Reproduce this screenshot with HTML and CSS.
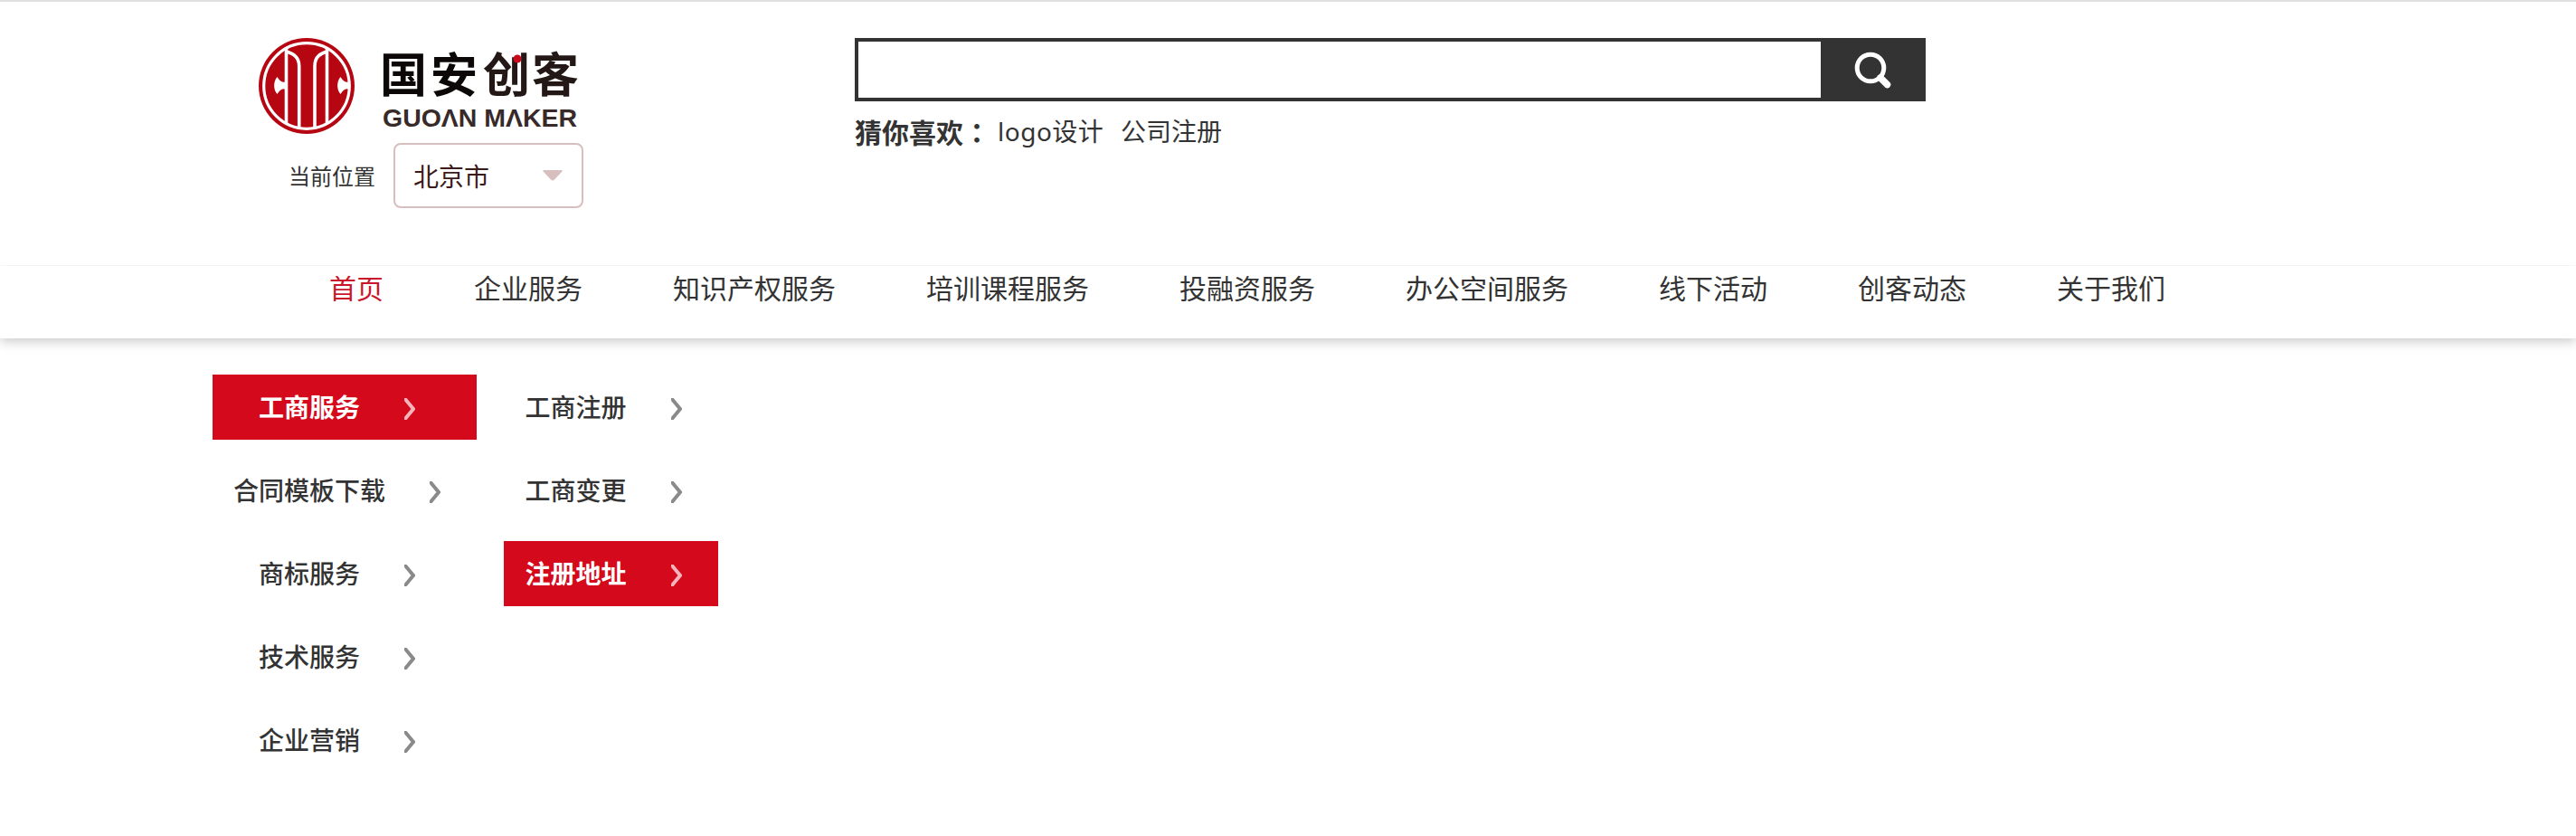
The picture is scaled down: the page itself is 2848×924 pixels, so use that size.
FILE: index.html
```html
<!DOCTYPE html>
<html lang="zh-CN">
<head>
<meta charset="utf-8">
<title>国安创客</title>
<link rel="stylesheet" href="styles.css">
</head>
<body>
<header class="header">
  <div class="brand">
    <svg class="logo" viewBox="0 0 354 106" width="354" height="106">
      <clipPath id="disc"><circle cx="53" cy="53" r="47"/></clipPath>
      <circle cx="53" cy="53" r="53" fill="#b50612"/>
      <g clip-path="url(#disc)">
        <g fill="none" stroke="#fff" stroke-width="3.6">
          <path d="M30.500 0V106M75.500 0V106"/>
          <path d="M30.500 15C37 17 44.700 20 44.700 31V106M75.500 15C69 17 62 20 62 31V106"/>
        </g>
        <path d="M30 48C26 50.500 23 47 20.500 43C16 48 16 57 20.500 62C23 58 26 55 30 57Z" fill="#fff"/>
        <path d="M100 48C96 50.500 93 47 90.500 43C86 48 86 57 90.500 62C93 58 96 55 100 57Z" fill="#fff"/>
      </g>
      <circle cx="53" cy="53" r="47.300" fill="none" stroke="#fff" stroke-width="3.200"/>
      <g class="logo-cn">
        <text x="134" y="60">国</text><text x="190" y="60">安</text>
        <text x="248" y="60" class="logo-cn-brown">创</text><text x="302" y="60" class="logo-cn-brown">客</text>
      </g>
      <circle cx="286" cy="23" r="4.500" fill="#c80a1b"/>
      <text class="logo-en" x="137" y="98" textLength="215" lengthAdjust="spacingAndGlyphs">GUOΛN MΛKER</text>
    </svg>
    <div class="location">
      <span class="location-label">当前位置</span>
      <div class="select">
        <span>北京市</span>
        <svg width="22" height="12" viewBox="0 0 22 12"><path d="M1.500 0H20.500Q23 0 21 2L13 10.500Q11 12.700 9 10.500L1 2Q-1 0 1.500 0Z" fill="#d8bfbf"/></svg>
      </div>
    </div>
  </div>
  <div class="search">
    <div class="search-bar">
      <input class="search-input" type="text">
      <button class="search-button">
        <svg width="44" height="44" viewBox="0 0 44 44" fill="none" stroke="#fff"><circle cx="19" cy="20" r="14.800" stroke-width="5"/><path d="M30 31L37.500 38.500" stroke-width="7.500" stroke-linecap="round"/></svg>
      </button>
    </div>
    <div class="guess"><b class="guess-title">猜你喜欢<span class="colon" lang="zh-TW">：</span></b><a class="guess-link">logo设计</a><a>公司注册</a></div>
  </div>
</header>
<nav class="nav">
  <a class="nav-active">首页</a><a>企业服务</a><a>知识产权服务</a><a>培训课程服务</a><a>投融资服务</a><a>办公空间服务</a><a>线下活动</a><a>创客动态</a><a>关于我们</a>
</nav>
<main class="menus">
  <ul class="menu menu-main">
    <li class="item item-active">工商服务<svg class="chevron" viewBox="0 0 12 24"><path d="M0 0L10 12L0 24"/></svg></li>
    <li class="item">合同模板下载<svg class="chevron" viewBox="0 0 12 24"><path d="M0 0L10 12L0 24"/></svg></li>
    <li class="item">商标服务<svg class="chevron" viewBox="0 0 12 24"><path d="M0 0L10 12L0 24"/></svg></li>
    <li class="item">技术服务<svg class="chevron" viewBox="0 0 12 24"><path d="M0 0L10 12L0 24"/></svg></li>
    <li class="item">企业营销<svg class="chevron" viewBox="0 0 12 24"><path d="M0 0L10 12L0 24"/></svg></li>
  </ul>
  <ul class="menu menu-sub">
    <li class="item">工商注册<svg class="chevron" viewBox="0 0 12 24"><path d="M0 0L10 12L0 24"/></svg></li>
    <li class="item">工商变更<svg class="chevron" viewBox="0 0 12 24"><path d="M0 0L10 12L0 24"/></svg></li>
    <li class="item item-active">注册地址<svg class="chevron" viewBox="0 0 12 24"><path d="M0 0L10 12L0 24"/></svg></li>
  </ul>
</main>
</body>
</html>
```
FILE: styles.css
```css
* { box-sizing: border-box; }
body {
  margin: 0;
  min-height: 924px;
  background: #fff;
  color: #333;
  font: 28px/40px "Noto Sans", "Noto Sans CJK SC", sans-serif;
  border-top: 2px solid #e0e0e0;
}
.header {
  display: flex;
  height: 292px;
  padding: 40px 0 0 286px;
}
.brand { width: 659px; }
.logo { display: block; }
.logo-cn { font: 700 52px "Noto Sans CJK SC", sans-serif; fill: #0c0808; }
.logo-cn-brown { fill: #231815; }
.logo-en { font: 700 28px "Liberation Sans", Arial, sans-serif; fill: #372a28; }
.location {
  display: flex;
  align-items: center;
  gap: 20px;
  padding: 10px 0 0 33px;
}
.location-label { padding-top: 2px; font-size: 24px; }
.select {
  display: flex;
  align-items: center;
  justify-content: space-between;
  width: 210px;
  height: 72px;
  padding: 2px 21px 0 20px;
  border: 2px solid #d8bfbf;
  border-radius: 8px;
  color: #3b1a1a;
}
.select svg { margin-bottom: 3px; }
.search-bar { display: flex; width: 1184px; height: 70px; }
.search-input {
  width: 1068px;
  padding: 0 16px;
  border: 4px solid #333;
  border-right: 0;
  outline: 0;
  background: #fff;
  font: inherit;
}
.search-button {
  display: flex;
  flex: 1;
  padding: 13px 0 0 36px;
  border: 0;
  background: #333;
}
.guess { display: flex; padding-top: 13px; }
.guess-title { width: 158px; font-size: 30px; white-space: nowrap; }
.colon { font-family: "Noto Sans CJK TC", sans-serif; }
.guess-link { width: 136px; letter-spacing: .5px; }
.nav {
  display: flex;
  gap: 100px;
  height: 80px;
  padding: 5px 0 0 364px;
  font-size: 30px;
  white-space: nowrap;
  background: #fff;
  box-shadow: 0 4px 12px rgba(0, 0, 0, .2);
  clip-path: inset(-1px 0 -20px);
}
.nav-active { color: #c9162b; }
.menus { display: flex; gap: 30px; padding: 40px 0 0 235px; }
.menu {
  display: flex;
  flex-direction: column;
  gap: 20px;
  margin: 0;
  padding: 0;
  list-style: none;
}
.menu-main { width: 292px; }
.menu-sub { width: 237px; }
.item {
  display: flex;
  align-items: center;
  justify-content: center;
  height: 72px;
  font-weight: 500;
}
.item-active { background: #d4091b; color: #fff; font-weight: 600; }
.chevron {
  width: 12px;
  height: 24px;
  margin: 4px 17px 0 49px;
  fill: none;
  stroke: #8a8a8a;
  stroke-width: 4;
}
.item-active .chevron { stroke: #f4b4ba; }
```
